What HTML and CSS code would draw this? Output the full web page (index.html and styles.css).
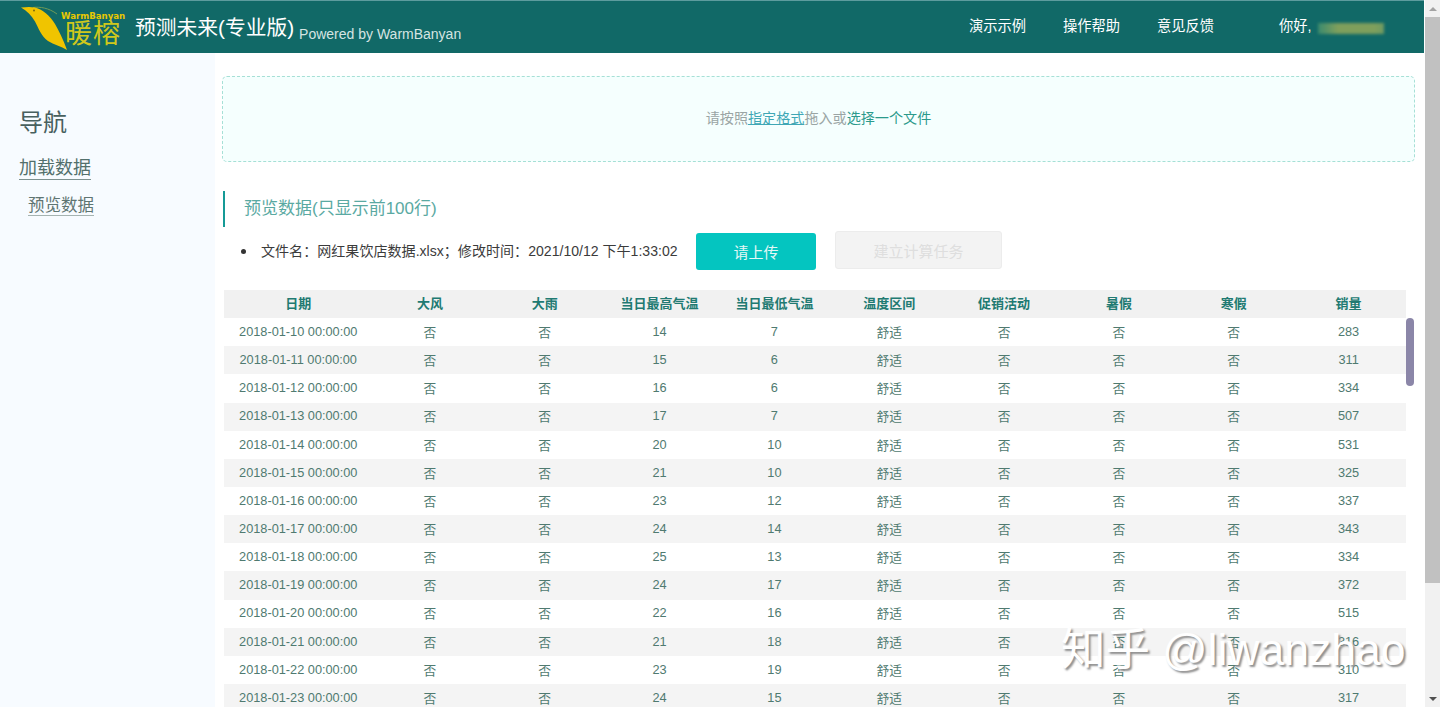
FILE: index.html
```html
<!DOCTYPE html>
<html lang="zh">
<head>
<meta charset="utf-8">
<title>预测未来(专业版)</title>
<link rel="stylesheet" href="styles.css">
</head>
<body>
<div class="page">
  <div class="viewport">
    <header class="topbar">
      <div class="brand">
        <svg class="logo" width="112" height="52" viewBox="0 0 112 52" aria-hidden="true">
          <path class="logo-crest" d="M13 6.5 C20 5.5 29 7 37 13"/>
          <path class="logo-body" d="M1 6.5 C6 6 10 5.5 15 6.5 C23 8.5 30 15 35 23 C39 30 43 38 47 49 C41 45.5 34 43.5 28 40 C21 35 18.5 27 15 20.5 C11.5 14.5 7 10 1 6.5 Z"/>
          <circle class="logo-eye" cx="14" cy="9.5" r="1"/>
          <text class="logo-en" x="41" y="17.5">WarmBanyan</text>
          <text class="logo-cn" x="45" y="42">暖榕</text>
        </svg>
        <h1 class="product">预测未来(专业版)</h1>
        <span class="powered">Powered by WarmBanyan</span>
      </div>
      <nav class="topnav">
        <a>演示示例</a>
        <a>操作帮助</a>
        <a>意见反馈</a>
      </nav>
      <div class="user">你好, <span class="user-blur"></span></div>
    </header>

    <div class="body-row">
      <aside class="sidebar">
        <h2 class="nav-title">导航</h2>
        <a class="nav-l1">加载数据</a>
        <a class="nav-l2">预览数据</a>
      </aside>

      <main class="content">
        <section class="dropzone">
          <span class="hint">请按照</span><a class="format-link">指定格式</a><span class="hint">拖入或</span><span class="choose">选择一个文件</span>
        </section>

        <h3 class="section-title">预览数据(只显示前100行)</h3>

        <div class="file-row">
          <ul class="file-list"><li>文件名：网红果饮店数据.xlsx；修改时间：2021/10/12 下午1:33:02</li></ul>
          <button class="btn btn-primary">请上传</button>
          <button class="btn btn-disabled" disabled>建立计算任务</button>
        </div>

        <div class="table-wrap">
          <table class="data">
            <thead>
              <tr><th>日期</th><th>大风</th><th>大雨</th><th>当日最高气温</th><th>当日最低气温</th><th>温度区间</th><th>促销活动</th><th>暑假</th><th>寒假</th><th>销量</th></tr>
            </thead>
            <tbody>
              <tr><td>2018-01-10 00:00:00</td><td>否</td><td>否</td><td>14</td><td>7</td><td>舒适</td><td>否</td><td>否</td><td>否</td><td>283</td></tr>
              <tr><td>2018-01-11 00:00:00</td><td>否</td><td>否</td><td>15</td><td>6</td><td>舒适</td><td>否</td><td>否</td><td>否</td><td>311</td></tr>
              <tr><td>2018-01-12 00:00:00</td><td>否</td><td>否</td><td>16</td><td>6</td><td>舒适</td><td>否</td><td>否</td><td>否</td><td>334</td></tr>
              <tr><td>2018-01-13 00:00:00</td><td>否</td><td>否</td><td>17</td><td>7</td><td>舒适</td><td>否</td><td>否</td><td>否</td><td>507</td></tr>
              <tr><td>2018-01-14 00:00:00</td><td>否</td><td>否</td><td>20</td><td>10</td><td>舒适</td><td>否</td><td>否</td><td>否</td><td>531</td></tr>
              <tr><td>2018-01-15 00:00:00</td><td>否</td><td>否</td><td>21</td><td>10</td><td>舒适</td><td>否</td><td>否</td><td>否</td><td>325</td></tr>
              <tr><td>2018-01-16 00:00:00</td><td>否</td><td>否</td><td>23</td><td>12</td><td>舒适</td><td>否</td><td>否</td><td>否</td><td>337</td></tr>
              <tr><td>2018-01-17 00:00:00</td><td>否</td><td>否</td><td>24</td><td>14</td><td>舒适</td><td>否</td><td>否</td><td>否</td><td>343</td></tr>
              <tr><td>2018-01-18 00:00:00</td><td>否</td><td>否</td><td>25</td><td>13</td><td>舒适</td><td>否</td><td>否</td><td>否</td><td>334</td></tr>
              <tr><td>2018-01-19 00:00:00</td><td>否</td><td>否</td><td>24</td><td>17</td><td>舒适</td><td>否</td><td>否</td><td>否</td><td>372</td></tr>
              <tr><td>2018-01-20 00:00:00</td><td>否</td><td>否</td><td>22</td><td>16</td><td>舒适</td><td>否</td><td>否</td><td>否</td><td>515</td></tr>
              <tr><td>2018-01-21 00:00:00</td><td>否</td><td>否</td><td>21</td><td>18</td><td>舒适</td><td>否</td><td>否</td><td>否</td><td>316</td></tr>
              <tr><td>2018-01-22 00:00:00</td><td>否</td><td>否</td><td>23</td><td>19</td><td>舒适</td><td>否</td><td>否</td><td>否</td><td>310</td></tr>
              <tr><td>2018-01-23 00:00:00</td><td>否</td><td>否</td><td>24</td><td>15</td><td>舒适</td><td>否</td><td>否</td><td>否</td><td>317</td></tr>
            </tbody>
          </table>
          <div class="inner-thumb"></div>
        </div>
      </main>
    </div>
    <div class="watermark">知乎 @liwanzhao</div>
  </div>

  <div class="scrollbar">
    <div class="sb-btn"><span class="arrow-up"></span></div>
    <div class="sb-track"><div class="sb-thumb"></div></div>
    <div class="sb-btn"><span class="arrow-down"></span></div>
  </div>
</div>
</body>
</html>
```

FILE: styles.css
```css
* { box-sizing: border-box; }
html, body { margin: 0; height: 100%; overflow: hidden; }
body {
  font-family: "Liberation Sans", "Noto Sans CJK SC", sans-serif;
  background: #fff;
  color: #333;
}
.page { display: flex; height: 707px; }
.viewport { position: relative; width: 1424px; height: 707px; overflow: hidden; flex: none; }

.topbar {
  height: 53px;
  background: #116967;
  border-top: 1px solid #5d9c9e;
  display: flex;
  align-items: center;
  color: #fff;
}
.brand { display: flex; align-items: center; width: 969px; flex: none; padding-left: 20px; }
.logo { flex: none; width: 112px; height: 52px; }
.logo-crest { fill: none; stroke: #6f9a58; stroke-width: 1; }
.logo-body { fill: #f0c400; }
.logo-eye { fill: #7a6a10; }
.logo-en { font: bold 8.6px "DejaVu Sans", sans-serif; fill: #e8c800; }
.logo-cn { font: 27px "Noto Sans CJK SC", sans-serif; fill: #cfc81c; letter-spacing: 1px; }
.product { margin: 2px 0 0 3px; font-size: 20.75px; font-weight: 400; line-height: 50px; white-space: nowrap; }
.powered { margin: 14px 0 0 5px; font-size: 14px; color: #d5e4e2; white-space: nowrap; }
.topnav { display: flex; gap: 37px; width: 310px; flex: none; font-size: 14.25px; margin-top: -6px; }
.user { display: flex; align-items: center; font-size: 14.25px; margin-top: -6px; white-space: pre; }
.user-blur { width: 66px; height: 11px; margin: 8px 0 0 3px; background: linear-gradient(90deg, #3b8a6e, #7f9f5c 30%, #7f9f5c 85%, #6f9a62); filter: blur(1.5px); }

.body-row { display: flex; }
.sidebar {
  width: 215px;
  height: 654px;
  flex: none;
  background: #f7fbff;
  padding: 55px 0 0 19px;
  display: flex;
  flex-direction: column;
  align-items: flex-start;
}
.nav-title { margin: 0; font-size: 24px; font-weight: 400; line-height: 30px; color: #48605e; }
.nav-l1 { margin-top: 19px; font-size: 18px; line-height: 22px; color: #52706c; border-bottom: 1px solid #7c918f; }
.nav-l2 { margin: 15px 0 0 9px; font-size: 16.5px; line-height: 20px; color: #5f7572; border-bottom: 1px solid #a5b3b1; }

.content { width: 1209px; flex: none; padding: 23px 0 0 7px; }
.dropzone {
  width: 1193px;
  height: 86px;
  padding-bottom: 5px;
  background: #f5fffe;
  border: 1px dashed #a6e0d6;
  border-radius: 5px;
  display: flex;
  justify-content: center;
  align-items: center;
  font-size: 14.1px;
}
.hint { color: #9aa5a4; }
.format-link { color: #3fa7b5; text-decoration: underline; }
.choose { color: #2b9a8c; }

.section-title {
  margin: 29px 0 0 1px;
  height: 36px;
  border-left: 2px solid #159a96;
  padding-left: 19px;
  font-size: 17px;
  font-weight: 400;
  line-height: 35px;
  color: #5aa9a2;
}

.file-row { display: flex; align-items: flex-start; margin: 4px 0 0 2px; height: 59px; }
.file-list { margin: 0; padding: 0 0 0 17px; width: 472px; flex: none; list-style: none; font-size: 14.07px; line-height: 40px; color: #3b3b3b; white-space: nowrap; }
.file-list li { display: flex; align-items: center; }
.file-list li::before { content: ""; width: 5px; height: 5px; margin-right: 15px; border-radius: 50%; background: #333; flex: none; }
.btn { font: 15px "Liberation Sans", "Noto Sans CJK SC", sans-serif; border-radius: 3px; flex: none; padding: 0; }
.btn-primary { width: 120px; height: 37px; margin-top: 2px; background: #04c5c0; border: 0; color: #e4f8f6; }
.btn-disabled { width: 167px; height: 38px; margin-left: 19px; background: #f3f3f3; border: 1px solid #ececec; color: #dedede; }

.table-wrap { position: relative; margin-left: 2px; width: 1192px; }
.data { border-collapse: collapse; table-layout: fixed; width: 1182px; font-size: 12.75px; }
.data th:first-child { width: 148.5px; }
.data th { height: 28.15px; padding: 0 0 3px; background: #f1f1f1; color: #217a72; font-size: 13px; font-weight: 700; text-align: center; }
.data td { height: 28.15px; padding: 0 0 1.5px; text-align: center; color: #4f7a70; white-space: nowrap; }
.data tbody tr:nth-child(even) td { background: #f4f4f4; }
.inner-thumb { position: absolute; left: 1182px; top: 28px; width: 8px; height: 68px; border-radius: 4px; background: #8b86a8; }

.watermark {
  position: absolute;
  left: 1061px;
  top: 624px;
  font-size: 44.5px;
  line-height: 52px;
  color: #fff;
  text-shadow: 2px 2px 2px #8f8f8f;
  white-space: nowrap;
}

.scrollbar { width: 16px; height: 707px; flex: none; background: #f1f1f1; border-left: 1px solid #fff; display: flex; flex-direction: column; }
.sb-btn { height: 17px; flex: none; display: flex; align-items: center; justify-content: center; }
.arrow-up { border: 4px solid transparent; border-top: 0; border-bottom: 4px solid #a3a3a3; }
.arrow-down { border: 4px solid transparent; border-bottom: 0; border-top: 4px solid #505050; }
.sb-track { flex: 1; }
.sb-thumb { height: 566px; background: #c1c1c1; }
```
